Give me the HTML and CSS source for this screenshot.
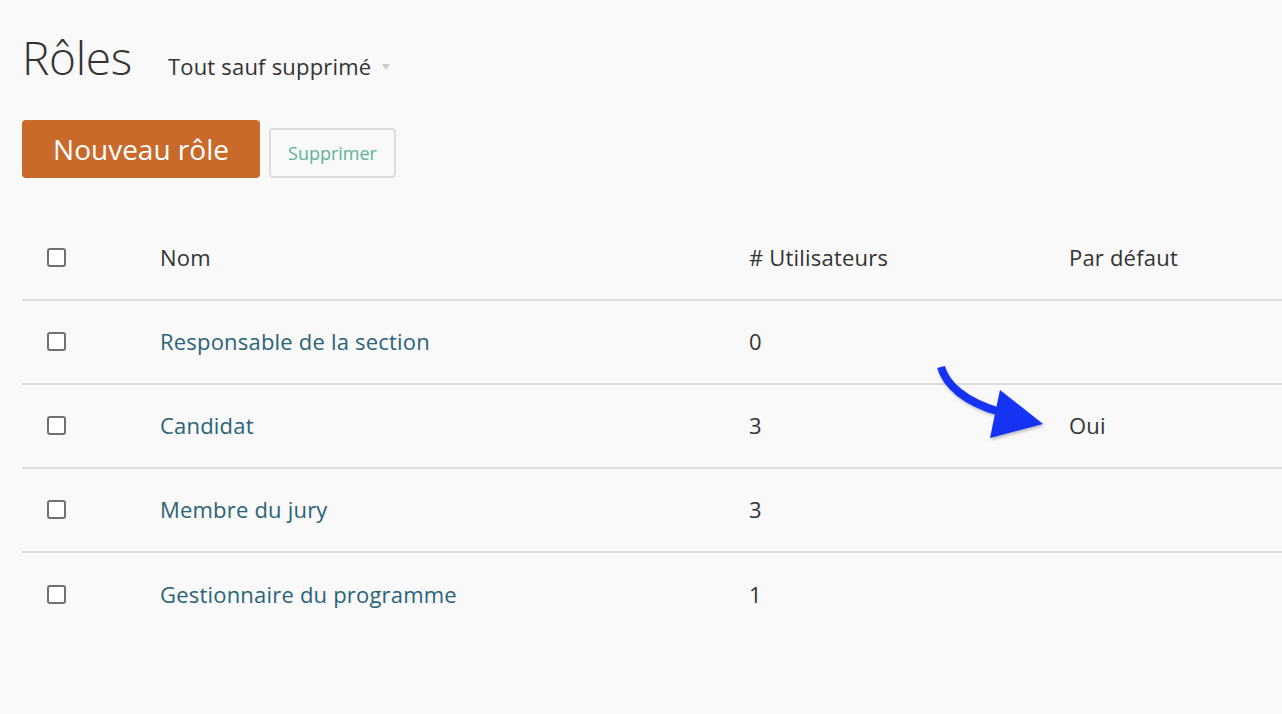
FILE: index.html
```html
<!DOCTYPE html>
<html lang="fr">
<head>
<meta charset="utf-8">
<title>Rôles</title>
<link rel="stylesheet" href="styles.css">
</head>
<body>
<div class="page">
  <div class="title-row">
    <h1 class="title">Rôles</h1>
    <div class="filter">Tout sauf supprimé <span class="caret"></span></div>
  </div>
  <div class="actions">
    <button class="btn-primary">Nouveau rôle</button>
    <button class="btn-secondary">Supprimer</button>
  </div>
  <div class="table">
    <div class="row head">
      <div class="cell"><span class="cb"></span></div>
      <div class="cell">Nom</div>
      <div class="cell"># Utilisateurs</div>
      <div class="cell">Par défaut</div>
    </div>
    <div class="row">
      <div class="cell"><span class="cb"></span></div>
      <div class="cell"><a class="link">Responsable de la section</a></div>
      <div class="cell">0</div>
      <div class="cell"></div>
    </div>
    <div class="row">
      <div class="cell"><span class="cb"></span></div>
      <div class="cell"><a class="link">Candidat</a></div>
      <div class="cell">3</div>
      <div class="cell">Oui</div>
    </div>
    <div class="row">
      <div class="cell"><span class="cb"></span></div>
      <div class="cell"><a class="link">Membre du jury</a></div>
      <div class="cell">3</div>
      <div class="cell"></div>
    </div>
    <div class="row last">
      <div class="cell"><span class="cb"></span></div>
      <div class="cell"><a class="link">Gestionnaire du programme</a></div>
      <div class="cell">1</div>
      <div class="cell"></div>
    </div>
  </div>
</div>
<svg class="arrow" width="130" height="100" viewBox="0 0 130 100" xmlns="http://www.w3.org/2000/svg">
  <defs>
    <filter id="sh" x="-20%" y="-20%" width="140%" height="140%">
      <feDropShadow dx="1" dy="2" stdDeviation="1.5" flood-color="#000" flood-opacity="0.25"/>
    </filter>
  </defs>
  <g filter="url(#sh)">
    <path d="M11 7 C 16 25, 35 42, 70 52" fill="none" stroke="#1232f2" stroke-width="8"/>
    <polygon points="70,30 60,78 113,64" fill="#1232f2"/>
  </g>
</svg>
</body>
</html>
```
FILE: styles.css
```css
html, body {
  margin: 0;
  padding: 0;
  background: #f9f9f9;
}
body {
  font-family: "Open Sans", "Liberation Sans", sans-serif;
  color: #333;
  width: 1282px;
  height: 714px;
  overflow: hidden;
  position: relative;
}
.page {
  padding: 25px 0 0 22px;
}
.title-row {
  display: flex;
  align-items: baseline;
  gap: 36px;
  height: 70px;
}
.title {
  margin: 0;
  font-weight: 300;
  font-size: 46px;
  line-height: 64px;
  color: #333;
  letter-spacing: -0.3px;
}
.filter {
  font-size: 22px;
  letter-spacing: 0.2px;
  color: #333;
}
.caret {
  display: inline-block;
  width: 0;
  height: 0;
  border-left: 4px solid transparent;
  border-right: 4px solid transparent;
  border-top: 6px solid #cccccc;
  margin-left: 5px;
  vertical-align: middle;
  position: relative;
  top: -2px;
}
.actions {
  display: flex;
  align-items: flex-end;
  gap: 9px;
  margin-top: 25px;
}
.btn-primary {
  font-family: inherit;
  background: #c9692a;
  color: #fff;
  border: none;
  border-radius: 4px;
  height: 58px;
  width: 238px;
  font-size: 28px;
  padding: 0;
}
.btn-secondary {
  font-family: inherit;
  background: transparent;
  color: #5ab395;
  border: 2px solid #dedede;
  border-radius: 4px;
  height: 50px;
  width: 127px;
  font-size: 18px;
  padding: 0;
}
.table {
  margin-top: 39px;
}
.row {
  display: grid;
  grid-template-columns: 138px 589px 320px 1fr;
  height: 84px;
  align-items: center;
  border-bottom: 2px solid #dddddd;
  box-sizing: border-box;
  font-size: 22px;
  letter-spacing: 0.2px;
  padding-bottom: 2px;
}
.row.last {
  border-bottom: none;
}
.cell {
  display: flex;
  align-items: center;
}
.cell:first-child {
  padding-left: 25px;
}
.cb {
  display: inline-block;
  width: 15px;
  height: 15px;
  border: 2px solid #707070;
  border-radius: 3px;
  background: #fff;
}
.link {
  color: #2a6378;
  text-decoration: none;
}
.arrow {
  position: absolute;
  left: 930px;
  top: 360px;
}
```
